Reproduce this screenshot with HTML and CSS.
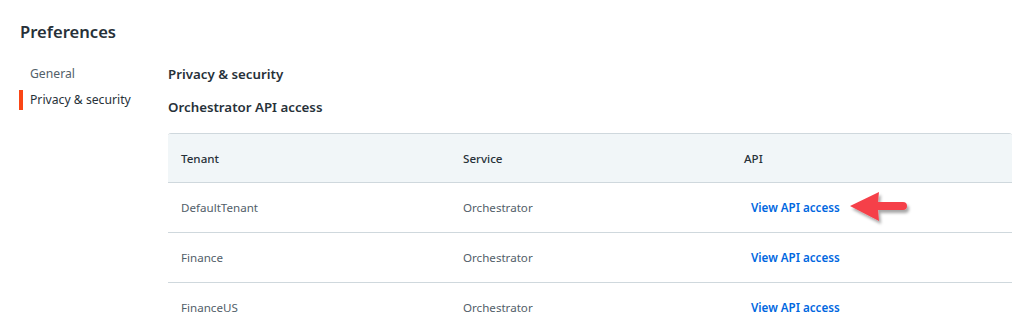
FILE: index.html
```html
<!DOCTYPE html>
<html>
<head>
<meta charset="utf-8">
<link rel="stylesheet" href="styles.css">
</head>
<body>
<div class="page">
  <h1 class="title">Preferences</h1>
  <div class="layout">
    <nav class="side">
      <div class="side-item">General</div>
      <div class="side-item active">Privacy &amp; security</div>
    </nav>
    <main class="content">
      <h2 class="h2">Privacy &amp; security</h2>
      <h3 class="h3">Orchestrator API access</h3>
      <div class="table">
        <div class="row head">
          <div class="cell">Tenant</div>
          <div class="cell">Service</div>
          <div class="cell">API</div>
        </div>
        <div class="row">
          <div class="cell">DefaultTenant</div>
          <div class="cell">Orchestrator</div>
          <div class="cell link-cell"><a class="link">View API access</a>
            <svg class="arrow" width="70" height="40" viewBox="0 0 70 40">
              <defs>
                <filter id="sh" x="-20%" y="-30%" width="150%" height="180%">
                  <feDropShadow dx="2" dy="3" stdDeviation="1.8" flood-color="#000" flood-opacity="0.35"/>
                </filter>
              </defs>
              <path filter="url(#sh)" fill="#f5414a" d="M4 15 L33 1 L32 11 L57 11 Q61 11 61 15 Q61 19 57 19 L32 19 L33 30 Z"/>
            </svg>
          </div>
        </div>
        <div class="row">
          <div class="cell">Finance</div>
          <div class="cell">Orchestrator</div>
          <div class="cell"><a class="link">View API access</a></div>
        </div>
        <div class="row">
          <div class="cell">FinanceUS</div>
          <div class="cell">Orchestrator</div>
          <div class="cell"><a class="link">View API access</a></div>
        </div>
      </div>
    </main>
  </div>
</div>
</body>
</html>
```

FILE: styles.css
```css
* { box-sizing: border-box; }
html, body { margin: 0; padding: 0; background: #fff; }
body {
  font-family: "Noto Sans", "Open Sans", sans-serif;
  color: #273139;
  overflow: hidden;
  height: 312px;
}
.page { padding: 20px 0 0 20px; }
.title {
  margin: 0;
  font-size: 16.6px;
  font-weight: 600;
  line-height: 24px;
  color: #273139;
}
.layout {
  display: flex;
  margin-top: 20px;
}
.side {
  width: 148px;
  flex: none;
  display: flex;
  flex-direction: column;
  gap: 6px;
}
.side-item {
  font-size: 12.2px;
  line-height: 20px;
  color: #526069;
  padding-left: 7px;
  border-left: 4px solid transparent;
  margin-left: -1px;
}
.side-item.active {
  color: #273139;
  border-left-color: #fa4616;
}
.content {
  width: 844px;
  flex: none;
}
.h2 {
  margin: 0;
  font-size: 13.3px;
  font-weight: 600;
  line-height: 20px;
  color: #273139;
}
.h3 {
  margin: 13px 0 0;
  font-size: 13.3px;
  font-weight: 600;
  line-height: 20px;
  color: #273139;
}
.table {
  margin-top: 16px;
  border-top: 1px solid #cfd8dd;
  border-top-right-radius: 3px;
  border-top-left-radius: 3px;
}
.row {
  display: grid;
  grid-template-columns: 282px 281px 281px;
  height: 50px;
  align-items: center;
  border-bottom: 1px solid #cfd8dd;
  padding-bottom: 1px;
}
.row.head {
  background: #f1f6f8;
  height: 49px;
  padding-bottom: 0;
  border-top-right-radius: 3px;
  border-top-left-radius: 3px;
}
.cell {
  padding-left: 13px;
  font-size: 11.6px;
  color: #526069;
  position: relative;
}
.head .cell {
  color: #273139;
  font-weight: 500;
}
.link {
  color: #0067df;
  font-weight: 600;
  margin-left: 7px;
  text-decoration: none;
}
.link-cell { display: flex; align-items: center; }
.arrow {
  position: absolute;
  left: 115px;
  top: -9px;
}
```
